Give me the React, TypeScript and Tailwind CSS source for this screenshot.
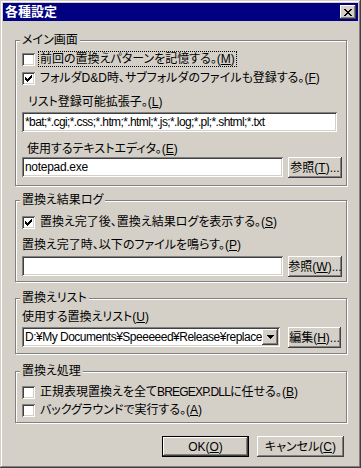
import type { ReactNode } from "react"

const RAISED =
  "shadow-[inset_-1px_-1px_#404040,inset_1px_1px_#ffffff,inset_-2px_-2px_#808080,inset_2px_2px_#d4d0c8]"
const SUNKEN =
  "shadow-[inset_1px_1px_#808080,inset_-1px_-1px_#ffffff,inset_2px_2px_#404040,inset_-2px_-2px_#d4d0c8]"

function CheckBox({ checked }: { checked?: boolean }) {
  return (
    <span className={`w-[13px] h-[13px] shrink-0 bg-white flex items-center justify-center ${SUNKEN}`}>
      {checked && (
        <svg width="7" height="7" viewBox="0 0 7 7" shapeRendering="crispEdges">
          <path
            fill="#000"
            d="M6 0h1v1h-1z M5 1h2v1h-2z M0 2h1v1h-1z M4 2h3v1h-3z M0 3h2v1h-2z M3 3h3v1h-3z M0 4h5v1h-5z M1 5h3v1h-3z M2 6h1v1h-1z"
          />
        </svg>
      )}
    </span>
  )
}

function CheckRow({
  checked,
  focus,
  className = "",
  children,
}: {
  checked?: boolean
  focus?: boolean
  className?: string
  children: ReactNode
}) {
  return (
    <div className={`flex items-center h-[16px] ${className}`}>
      <CheckBox checked={checked} />
      <span
        className={`ml-[3px] h-[16px] px-[1px] leading-[14px] whitespace-nowrap border ${
          focus ? "border-dotted border-black" : "border-transparent"
        }`}
      >
        {children}
      </span>
    </div>
  )
}

function Group({ title, className = "", children }: { title: string; className?: string; children: ReactNode }) {
  return (
    <div
      className={`relative w-[332px] border border-[#808080] shadow-[1px_1px_0_#ffffff,inset_1px_1px_0_#ffffff] ${className}`}
    >
      <span className="absolute left-[4px] top-[-9px] px-[2px] h-[16px] leading-[16px] bg-[#d4d0c8] whitespace-nowrap">
        {title}
      </span>
      {children}
    </div>
  )
}

function Edit({ value, className = "" }: { value: string; className?: string }) {
  return (
    <div
      className={`h-[20px] bg-white pl-[3px] pr-[2px] leading-[20px] whitespace-nowrap overflow-hidden ${SUNKEN} ${className}`}
    >
      {value}
    </div>
  )
}

function Btn({ children, def, className = "" }: { children: ReactNode; def?: boolean; className?: string }) {
  return (
    <div className={`shrink-0 ${def ? "border border-black" : ""} ${className}`}>
      <div className={`w-full h-full flex items-center justify-center whitespace-nowrap bg-[#d4d0c8] ${RAISED}`}>
        {children}
      </div>
    </div>
  )
}

export default function App() {
  return (
    <div className="w-[361px] h-[468px] overflow-hidden bg-[#d4d0c8] p-[3px] text-black text-[12px] leading-[16px] font-['Liberation_Sans','Noto_Sans_CJK_JP',sans-serif] [font-feature-settings:'palt'] shadow-[inset_-1px_-1px_#404040,inset_1px_1px_#d4d0c8,inset_-2px_-2px_#808080,inset_2px_2px_#ffffff]">
      {/* title bar */}
      <div className="h-[18px] bg-[#000080] flex items-center justify-between pl-[2px] pr-[2px]">
        <span className="text-white font-bold text-[13px] leading-[18px]">各種設定</span>
        <div className={`w-[16px] h-[14px] bg-[#d4d0c8] flex items-center justify-center ${RAISED}`}>
          <svg width="8" height="7" viewBox="0 0 8 7" shapeRendering="crispEdges">
            <path
              fill="#000"
              d="M0 0h2v1h-2z M6 0h2v1h-2z M1 1h2v1h-2z M5 1h2v1h-2z M2 2h4v1h-4z M3 3h2v1h-2z M2 4h4v1h-4z M1 5h2v1h-2z M5 5h2v1h-2z M0 6h2v1h-2z M6 6h2v1h-2z"
            />
          </svg>
        </div>
      </div>

      <div className="ml-[12px] flex flex-col">
        <Group title="メイン画面" className="mt-[19px] h-[146px]">
          <div className="pl-[6px] pt-[10px]">
            <CheckRow focus>
              前回の置換えパターンを記憶する。(<u>M</u>)
            </CheckRow>
            <CheckRow checked className="mt-[3px]">
              フォルダD&amp;D時、サブフォルダのファイルも登録する。(<u>F</u>)
            </CheckRow>
            <div className="mt-[8px] pl-[6px] h-[16px]">
              リスト登録可能拡張子。(<u>L</u>)
            </div>
            <Edit
              className="mt-[2px] w-[315px] tracking-[-0.6px]"
              value="*bat;*.cgi;*.css;*.htm;*.html;*.js;*.log;*.pl;*.shtml;*.txt"
            />
            <div className="mt-[9px] pl-[5px] h-[16px]">
              使用するテキストエディタ。(<u>E</u>)
            </div>
            <div className="flex items-start gap-[5px]">
              <Edit className="w-[261px] tracking-[-0.3px]" value="notepad.exe" />
              <Btn className="w-[54px] h-[21px]">
                参照(<u>T</u>)...
              </Btn>
            </div>
          </div>
        </Group>

        <Group title="置換え結果ログ" className="mt-[14px] h-[82px]">
          <div className="pl-[6px] pt-[13px]">
            <CheckRow checked>
              置換え完了後、置換え結果ログを表示する。(<u>S</u>)
            </CheckRow>
            <div className="mt-[7px] h-[16px]">
              置換え完了時、以下のファイルを鳴らす。(<u>P</u>)
            </div>
            <div className="mt-[3px] flex items-start gap-[5px]">
              <Edit className="w-[261px]" value="" />
              <Btn className="w-[54px] h-[21px]">
                参照(<u>W</u>)...
              </Btn>
            </div>
          </div>
        </Group>

        <Group title="置換えリスト" className="mt-[16px] h-[56px]">
          <div className="pl-[6px] pt-[10px]">
            <div className="h-[16px]">
              使用する置換えリスト(<u>U</u>)
            </div>
            <div className="mt-[2px] flex items-start gap-[8px]">
              <div className={`w-[258px] h-[20px] bg-white flex items-center pl-[3px] pr-[2px] ${SUNKEN}`}>
                <span className="flex-1 min-w-0 overflow-hidden whitespace-nowrap leading-[16px] tracking-[-0.5px]">
                  D:¥My Documents¥Speeeeed¥Release¥replace
                </span>
                <div className={`w-[16px] h-[16px] shrink-0 bg-[#d4d0c8] flex items-center justify-center ${RAISED}`}>
                  <svg width="7" height="4" viewBox="0 0 7 4" shapeRendering="crispEdges">
                    <path fill="#000" d="M0 0h7v1h-7z M1 1h5v1h-5z M2 2h3v1h-3z M3 3h1v1h-1z" />
                  </svg>
                </div>
              </div>
              <Btn className="w-[53px] h-[21px]">
                編集(<u>H</u>)...
              </Btn>
            </div>
          </div>
        </Group>

        <Group title="置換え処理" className="mt-[17px] h-[52px]">
          <div className="pl-[6px] pt-[12px]">
            <CheckRow>
              正規表現置換えを全て<span className="tracking-[-0.8px]">BREGEXP.DLL</span>に任せる。(<u>B</u>)
            </CheckRow>
            <CheckRow className="mt-[2px]">
              バックグラウンドで実行する。(<u>A</u>)
            </CheckRow>
          </div>
        </Group>

        <div className="mt-[13px] w-[332px] pr-[3px] flex justify-end gap-[8px]">
          <Btn def className="w-[87px] h-[21px]">
            OK(<u>O</u>)
          </Btn>
          <Btn className="w-[87px] h-[21px]">
            キャンセル(<u>C</u>)
          </Btn>
        </div>
      </div>
    </div>
  )
}
